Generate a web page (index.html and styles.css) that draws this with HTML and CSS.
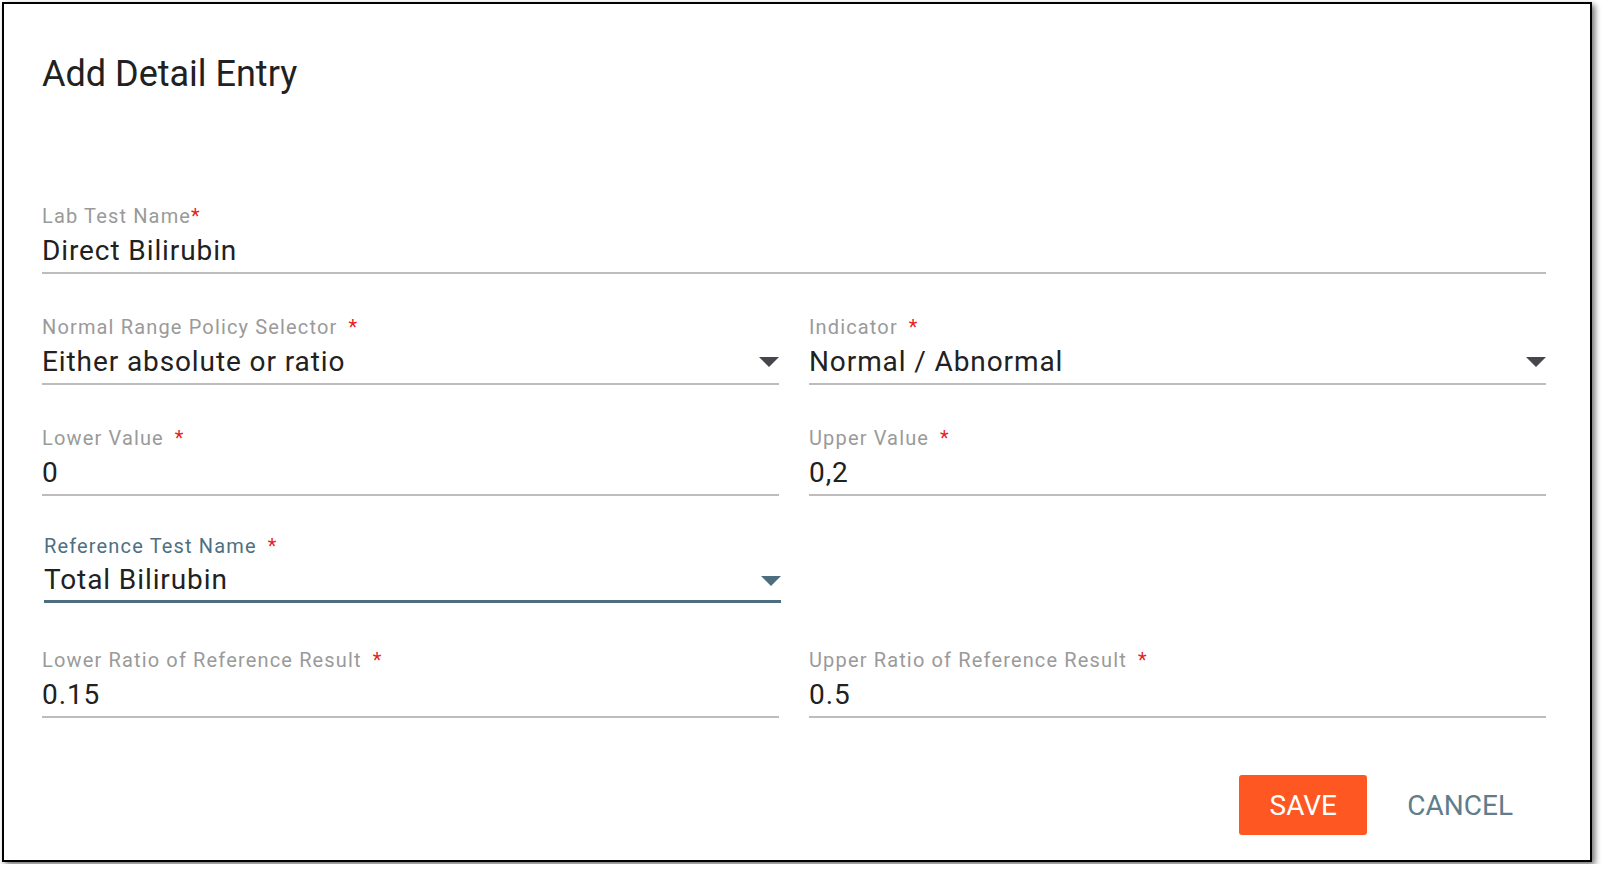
FILE: index.html
```html
<!DOCTYPE html>
<html>
<head>
<meta charset="utf-8">
<link rel="stylesheet" href="styles.css">
</head>
<body>
<div class="dialog">
  <h2 class="title">Add Detail Entry</h2>
  <div class="form">
    <div class="field wide">
      <div class="label">Lab Test Name<span class="req tight">*</span></div>
      <div class="value"><span class="text">Direct Bilirubin</span></div>
    </div>
    <div class="field">
      <div class="label">Normal Range Policy Selector<span class="req">*</span></div>
      <div class="value"><span class="text">Either absolute or ratio</span><svg class="arrow" viewBox="0 0 20 10"><path d="M0 0H20L10 10Z"/></svg></div>
    </div>
    <div class="field">
      <div class="label">Indicator<span class="req">*</span></div>
      <div class="value"><span class="text">Normal / Abnormal</span><svg class="arrow" viewBox="0 0 20 10"><path d="M0 0H20L10 10Z"/></svg></div>
    </div>
    <div class="field">
      <div class="label">Lower Value<span class="req">*</span></div>
      <div class="value"><span class="text">0</span></div>
    </div>
    <div class="field">
      <div class="label">Upper Value<span class="req">*</span></div>
      <div class="value"><span class="text">0,2</span></div>
    </div>
    <div class="field focused">
      <div class="label">Reference Test Name<span class="req">*</span></div>
      <div class="value"><span class="text">Total Bilirubin</span><svg class="arrow" viewBox="0 0 20 10"><path d="M0 0H20L10 10Z"/></svg></div>
    </div>
    <div class="field empty"></div>
    <div class="field">
      <div class="label">Lower Ratio of Reference Result<span class="req">*</span></div>
      <div class="value"><span class="text">0.15</span></div>
    </div>
    <div class="field">
      <div class="label">Upper Ratio of Reference Result<span class="req">*</span></div>
      <div class="value"><span class="text">0.5</span></div>
    </div>
  </div>
  <div class="actions">
    <button class="btn save">SAVE</button>
    <button class="btn cancel">CANCEL</button>
  </div>
</div>
</body>
</html>
```

FILE: styles.css
```css
html, body {
  margin: 0;
  padding: 0;
  background: #ffffff;
}
body {
  padding: 2px;
  font-family: Roboto, "Liberation Sans", Arial, sans-serif;
}
.dialog {
  box-sizing: border-box;
  width: 1590px;
  height: 860px;
  border: 2px solid #000;
  background: #fff;
  box-shadow: 3px 3px 6px rgba(0, 0, 0, 0.55);
  padding: 48px 44px 0 38px;
}
.title {
  margin: 0;
  font-size: 36px;
  line-height: 44px;
  font-weight: 400;
  color: #212121;
}
.form {
  margin-top: 108px;
  display: grid;
  grid-template-columns: 737px 737px;
  column-gap: 30px;
  row-gap: 41px;
  grid-auto-rows: 70px;
}
.field.wide {
  grid-column: 1 / span 2;
}
.field {
  display: flex;
  flex-direction: column;
}
.label {
  font-size: 20px;
  line-height: 24px;
  height: 24px;
  color: #9a9a9a;
  letter-spacing: 1.15px;
  white-space: nowrap;
}
.req {
  color: #e8231f;
  margin-left: 11px;
  letter-spacing: 0;
}
.req.tight {
  margin-left: 0;
}
.value {
  display: flex;
  align-items: flex-start;
  height: 44px;
  border-bottom: 2px solid #bdbdbd;
  font-size: 28px;
  line-height: 44px;
  color: #212121;
  letter-spacing: 0.9px;
}
.value .text {
  flex: 1;
  padding-top: 1px;
  white-space: nowrap;
}
.arrow {
  width: 20px;
  height: 10px;
  margin-top: 18px;
  fill: #46464c;
  flex: none;
}
.field.empty {
  border: none;
}
.field.focused {
  margin-top: -3px;
  margin-left: 2px;
  margin-right: -2px;
}
.field.focused .label {
  color: #4d7083;
}
.field.focused .value {
  height: 42px;
  line-height: 42px;
  border-bottom: 3px solid #4d6e7e;
}
.field.focused .arrow {
  fill: #4d6e7e;
}
.actions {
  margin-top: 57px;
  margin-right: 3px;
  display: flex;
  justify-content: flex-end;
  gap: 10px;
}
.btn {
  height: 60px;
  padding: 0 30px;
  border: none;
  border-radius: 3px;
  font-family: Roboto, "Liberation Sans", Arial, sans-serif;
  font-size: 28px;
  font-weight: 400;
  cursor: pointer;
}
.save {
  width: 128px;
  background: #ff5722;
  color: #ffffff;
}
.cancel {
  background: transparent;
  color: #5f7d8b;
}
```
